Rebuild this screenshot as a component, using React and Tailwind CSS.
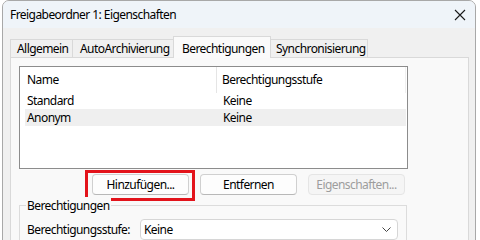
import React from "react";

const font = { fontFamily: '"Noto Sans", "DejaVu Sans", sans-serif' };

function Btn({ children, disabled, className = "" }) {
  return (
    <div
      className={
        "flex h-[21px] w-[97px] items-center justify-center rounded-[4px] border text-[12px] leading-none " +
        (disabled
          ? "border-[#e5e5e5] bg-[#f5f5f5] text-[#9d9d9d]"
          : "border-[#d0d0d0] border-b-[#b8b8b8] bg-[#fdfdfd] text-black") +
        " " +
        className
      }
    >
      {children}
    </div>
  );
}

export default function App() {
  return (
    <div className="h-[240px] w-[480px] overflow-hidden bg-white tracking-[-0.035em]" style={font}>
      <div className="ml-[2px] h-[260px] w-[474px] overflow-hidden rounded-t-[7px] border border-[#a8a8a8] bg-[#f0f0f0]">
        {/* Title bar */}
        <div className="flex h-[27px] items-center justify-between bg-[#eff4f9] pl-[7px] pr-[8px]">
          <span className="text-[12px] text-black">Freigabeordner 1: Eigenschaften</span>
          <svg width="12" height="12" viewBox="0 0 12 12" className="mr-[1px]">
            <path d="M1 1 L11 11 M11 1 L1 11" stroke="#1a1a1a" strokeWidth="1.1" />
          </svg>
        </div>

        {/* Tabs */}
        <div className="pl-[7px] pr-[6px] pt-[8px]">
          <div className="flex h-[21px] items-end text-[12px] text-black">
            <div className="flex h-[18px] w-[62px] items-center border-l border-t border-[#d9d9d9] bg-[#f0f0f0] pl-[6px]">
              Allgemein
            </div>
            <div className="flex h-[18px] w-[101px] items-center border-l border-t border-[#d9d9d9] bg-[#f0f0f0] pl-[7px]">
              AutoArchivierung
            </div>
            <div className="relative z-10 -mb-px flex h-[22px] w-[98px] items-start border-x border-t border-[#d9d9d9] bg-[#fafafa] pl-[8px] pt-[3px]">
              Berechtigungen
            </div>
            <div className="flex h-[18px] w-[97px] items-center border-r border-t border-[#d9d9d9] bg-[#f0f0f0] pl-[5px]">
              Synchronisierung
            </div>
          </div>

          {/* Panel */}
          <div className="h-[200px] w-[459px] border border-[#d9d9d9] bg-[#f9f9f9] pl-[8px] pt-[8px]">
            {/* List view */}
            <div className="h-[103px] w-[389px] border border-[#8c8c8c] bg-white text-[12px] text-black">
              <div className="flex h-[26px] items-center">
                <div className="flex h-full w-[197px] items-center border-r border-[#e5e5e5] pl-[7px]">Name</div>
                <div className="flex h-full w-[189px] items-center border-r border-[#f0f0f0] pl-[5px]">Berechtigungsstufe</div>
              </div>
              <div className="flex h-[16px] items-center">
                <div className="w-[198px] pl-[7px]">Standard</div>
                <div className="pl-[5px]">Keine</div>
              </div>
              <div className="ml-[5px] flex h-[17px] w-[381px] items-center bg-[#efefef]">
                <div className="w-[193px] pl-[2px]">Anonym</div>
                <div className="pl-[5px]">Keine</div>
              </div>
            </div>

            {/* Buttons */}
            <div className="mt-[5px] flex gap-[11px] pl-[73px]">
              <div className="relative">
                <Btn>Hinzufügen...</Btn>
                <div className="pointer-events-none absolute -bottom-[6px] -left-[7px] -right-[6px] -top-[4px] border-[3px] border-[#e3131b]" />
              </div>
              <Btn>Entfernen</Btn>
              <Btn disabled>Eigenschaften...</Btn>
            </div>

            {/* Group box */}
            <div className="relative mt-[10px] h-[60px] w-[388px] border border-[#dcdcdc] pl-[7px]">
              <div className="absolute -top-[9px] left-[6px] bg-[#f9f9f9] px-[1px] text-[12px] text-black">Berechtigungen</div>
              <div className="mt-[13px] flex items-center text-[12px] text-black">
                <span className="w-[113px]">Berechtigungsstufe:</span>
                <div className="flex h-[21px] w-[258px] items-center justify-between rounded-[4px] border border-[#d6d6d6] bg-white pl-[3px] pr-[6px]">
                  <span>Keine</span>
                  <svg width="9" height="5" viewBox="0 0 9 5">
                    <path d="M0.5 0.5 L4.5 4.5 L8.5 0.5" fill="none" stroke="#444" strokeWidth="1" />
                  </svg>
                </div>
              </div>
            </div>
          </div>
        </div>
      </div>
    </div>
  );
}
